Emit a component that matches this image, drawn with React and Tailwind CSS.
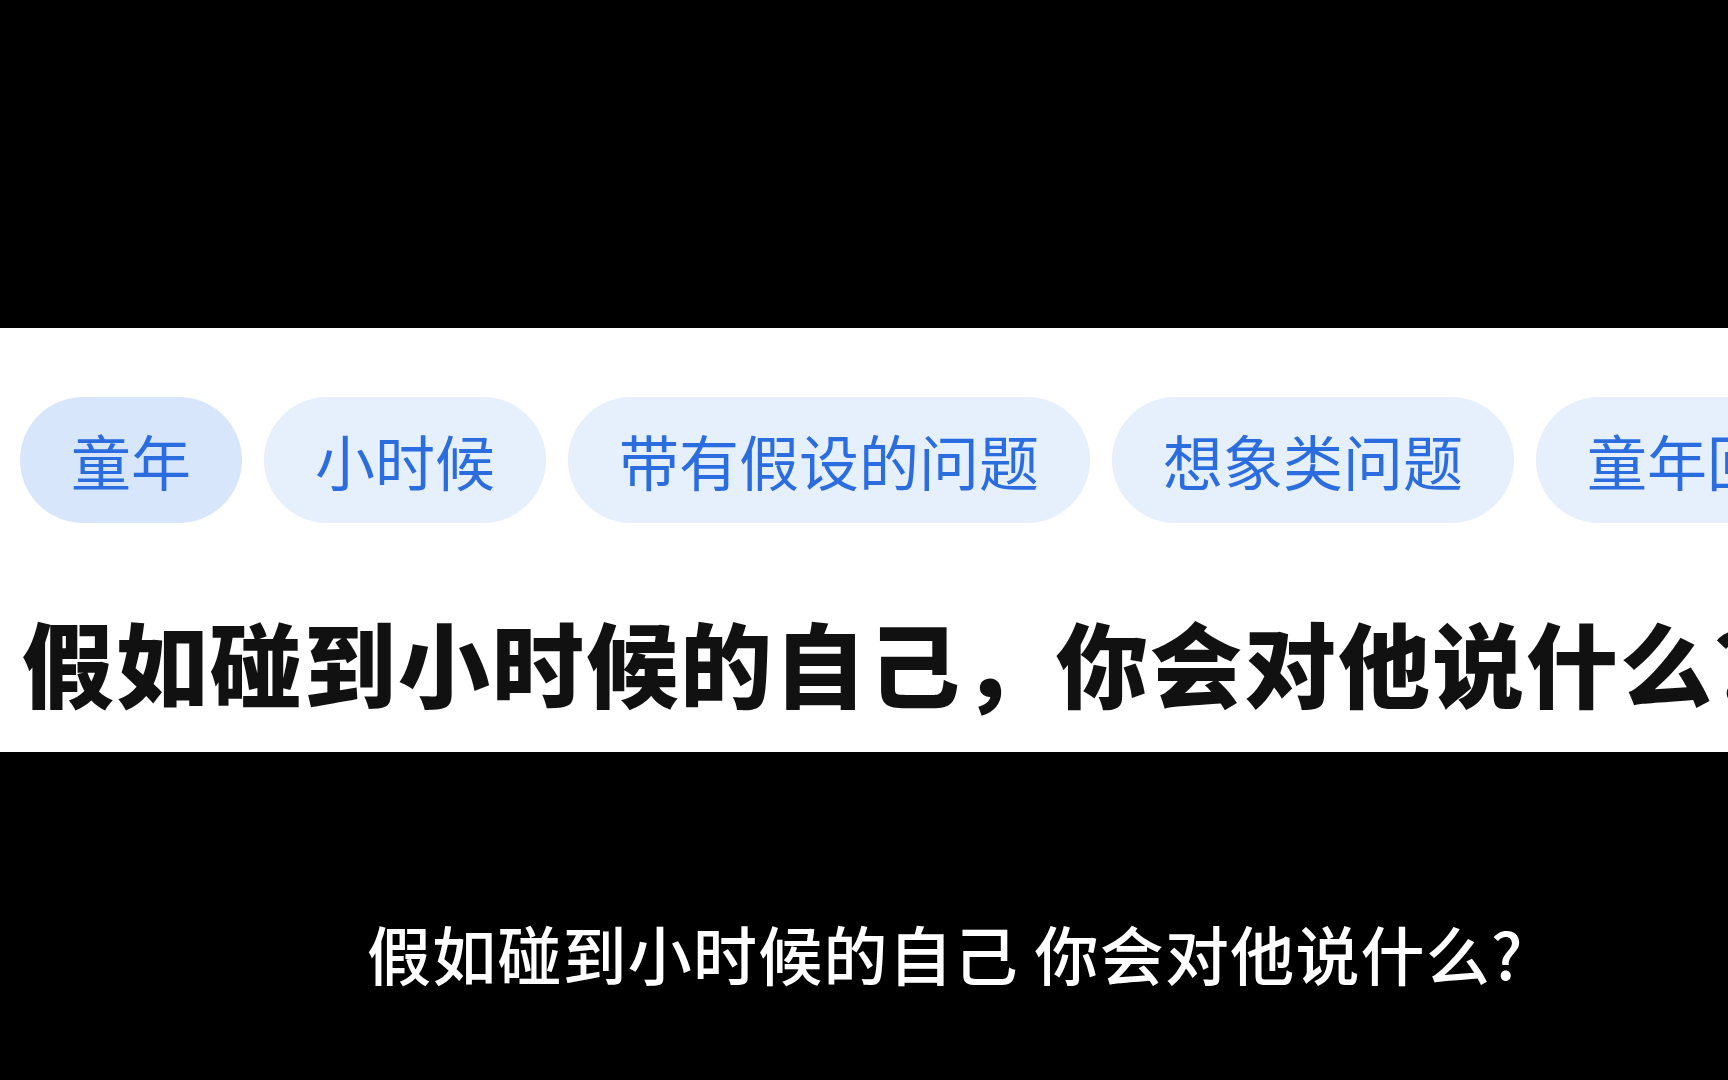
import React from "react";

const tags = ["童年", "小时候", "带有假设的问题", "想象类问题", "童年回忆"];

export default function App() {
  return (
    <div
      className="flex h-[1080px] w-[1728px] flex-col overflow-hidden bg-black"
      style={{ fontFamily: '"Noto Sans CJK SC", "Noto Sans", sans-serif' }}
    >
      <div className="h-[328px] shrink-0" />

      <div className="h-[424px] shrink-0 overflow-hidden bg-white pl-[20px] pt-[69px]">
        <div className="flex gap-[22px] whitespace-nowrap">
          {tags.map((t, i) => (
            <div
              key={t}
              className={
                "flex h-[126px] shrink-0 items-center rounded-full px-[51px] text-[60px] font-normal leading-none text-[#2b6ddf] " +
                (i === 0 ? "bg-[#d8e6fb]" : "bg-[#e6effc]")
              }
            >
              {t}
            </div>
          ))}
        </div>
        <h1 className="mt-[92px] whitespace-nowrap pl-[2px] text-[92px] font-black leading-none tracking-[2px] text-[#111]">
          假如碰到小时候的自己，你会对他说什么？
        </h1>
      </div>

      <div className="flex-1 pl-[367px] pt-[168px]">
        <p className="whitespace-nowrap text-[64px] font-medium leading-none tracking-[1.2px] text-white">
          假如碰到小时候的自己 你会对他说什么?
        </p>
      </div>
    </div>
  );
}
